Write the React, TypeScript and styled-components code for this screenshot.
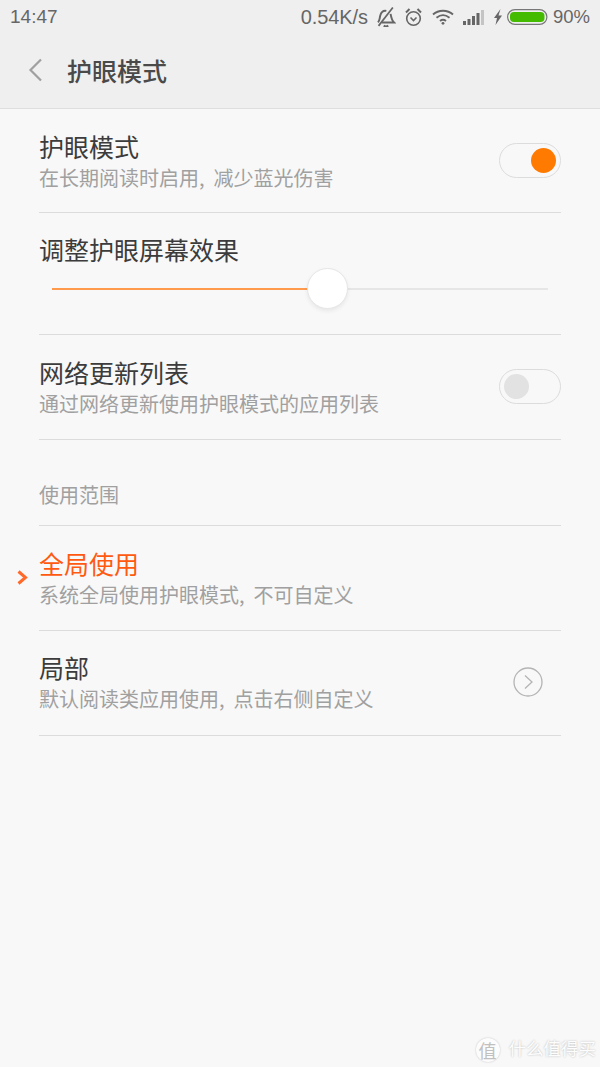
import React from "react";
import styled, { createGlobalStyle } from "styled-components";

const GlobalStyle = createGlobalStyle`
  html, body {
    margin: 0;
    padding: 0;
    background: #f8f8f8;
  }
`;

const cjk = `"Noto Sans CJK SC", "Liberation Sans", sans-serif`;

const Page = styled.div`
  position: relative;
  width: 600px;
  height: 1067px;
  overflow: hidden;
  background: #f8f8f8;
  font-family: ${cjk};
`;

const Top = styled.div`
  height: 108px;
  background: #efefef;
  border-bottom: 1px solid #dedede;
  display: flex;
  flex-direction: column;
`;

const StatusBar = styled.div`
  height: 34px;
  padding: 0 10px;
  display: flex;
  align-items: center;
  justify-content: space-between;
  font-family: "Liberation Sans", sans-serif;
  font-size: 19px;
  color: #666;
`;

const StatusRight = styled.div`
  display: flex;
  align-items: center;
`;

const Speed = styled.span`
  margin-right: 8px;
  font-size: 20px;
  letter-spacing: -0.1px;
`;

const Percent = styled.span`
  font-size: 18.500px;
`;

const StatusIcon = styled.svg<{ $gap?: number }>`
  display: block;
  margin-right: ${(p) => p.$gap ?? 0}px;
`;

const Header = styled.div`
  flex: 1;
  display: flex;
  align-items: center;
  padding: 0 0 2px 28px;
`;

const Title = styled.h1`
  margin: 0 0 0 24px;
  font-size: 25px;
  line-height: 32px;
  font-weight: 500;
  color: #4a4a4a;
`;

const List = styled.div`
  padding: 0 39px;
`;

const Row = styled.div<{ $height?: number; $raise?: number }>`
  position: relative;
  height: ${(p) => p.$height ?? 105}px;
  box-sizing: border-box;
  padding-bottom: ${(p) => p.$raise ?? 0}px;
  border-bottom: 1px solid #dcdcdc;
  display: flex;
  align-items: center;
  justify-content: space-between;
`;

const RowText = styled.div`
  display: flex;
  flex-direction: column;
  gap: 2px;
`;

const RowTitle = styled.div<{ $active?: boolean }>`
  font-size: 25px;
  line-height: 32px;
  color: ${(p) => (p.$active ? "#ff5a10" : "#3c3c3c")};
`;

const RowSub = styled.div`
  font-size: 20px;
  line-height: 28px;
  color: #a0a0a0;
`;

const SliderRow = styled.div`
  height: 122px;
  box-sizing: border-box;
  border-bottom: 1px solid #dcdcdc;
  padding-top: 20px;
`;

const SliderTrack = styled.div`
  position: relative;
  height: 2px;
  margin: 23px 13px 0;
  background: #e6e6e6;
`;

const SliderFill = styled.div`
  height: 100%;
  background: #ff9a4d;
`;

const SliderThumb = styled.div`
  position: absolute;
  top: -20px;
  width: 41px;
  height: 41px;
  margin-left: -20px;
  box-sizing: border-box;
  border-radius: 50%;
  background: #fff;
  border: 1px solid #e6e6e6;
  box-shadow: 0 2px 4px rgba(0, 0, 0, 0.07);
`;

const Section = styled.div`
  height: 86px;
  box-sizing: border-box;
  border-bottom: 1px solid #dcdcdc;
  padding-top: 41px;
  font-size: 20px;
  line-height: 28px;
  color: #a0a0a0;
`;

const Switch = styled.div<{ $on?: boolean }>`
  width: 62px;
  height: 35px;
  margin-bottom: 1px;
  box-sizing: border-box;
  border: 1px solid #dcdcdc;
  border-radius: 18px;
  padding: 4px;
  display: flex;
  justify-content: ${(p) => (p.$on ? "flex-end" : "flex-start")};
`;

const Knob = styled.div<{ $on?: boolean }>`
  width: 25px;
  height: 25px;
  border-radius: 50%;
  background: ${(p) => (p.$on ? "#ff7a00" : "#e2e2e2")};
`;

const SelectedMark = styled.svg`
  position: absolute;
  left: -22px;
  top: 44px;
`;

const Detail = styled.svg`
  display: block;
  margin-right: 18px;
`;

const Watermark = styled.div`
  position: absolute;
  right: 4px;
  bottom: 3px;
  display: flex;
  align-items: center;
  gap: 9px;
  font-size: 17.500px;
  line-height: 24px;
  color: #fdfdfd;
  text-shadow: 0 0 2px rgba(0, 0, 0, 0.28);
`;

const WatermarkText = styled.span`
  padding-bottom: 4px;
`;

const WatermarkBadge = styled.div`
  width: 24px;
  height: 24px;
  border-radius: 50%;
  background: #fcfcfc;
  box-shadow: 0 0 2px rgba(0, 0, 0, 0.22);
  color: #c0c0c0;
  text-shadow: none;
  font-size: 18px;
  line-height: 24px;
  text-align: center;
`;

function MuteIcon() {
  return (
    <StatusIcon $gap={9} width="20" height="20" viewBox="2.500 1 16 17.500" fill="none" stroke="#666" strokeWidth="1.700">
      <path d="M3.500 14.500C5 13 4.800 11 5.500 8.500C6.300 5.500 8.500 4 10.800 4.400" />
      <path d="M14.500 7C15 10 15.500 12.500 17.500 14.500H7" />
      <path d="M8.500 17.300c1 .8 3 .8 4 0" />
      <path d="M4 17.500L16.500 1.500" strokeWidth="1.500" />
    </StatusIcon>
  );
}

function AlarmIcon() {
  return (
    <StatusIcon $gap={10} width="17" height="20" viewBox="0 0 17 20" fill="none" stroke="#666" strokeWidth="1.600">
      <circle cx="8.500" cy="11.500" r="6.800" />
      <path d="M5.500 10.500L8.500 13.500L11.500 10.500" />
      <path d="M1 5.500L4.500 2M16 5.500L12.500 2" strokeWidth="2" />
    </StatusIcon>
  );
}

function WifiIcon() {
  return (
    <StatusIcon $gap={9} width="22" height="16" viewBox="0 0 22 16" fill="none" stroke="#666" strokeWidth="1.900">
      <path d="M1 5.500C6.500 .5 15.500 .5 21 5.500" />
      <path d="M4.500 8.800C8.500 5.500 13.500 5.500 17.500 8.800" />
      <path d="M8 12C9.800 10.600 12.200 10.600 14 12" />
      <circle cx="11" cy="14.300" r="1.400" fill="#666" stroke="none" />
    </StatusIcon>
  );
}

function SignalIcon() {
  return (
    <StatusIcon $gap={10} width="21" height="15" viewBox="0 0 21 15">
      <rect x="0" y="11" width="3" height="4" fill="#666" />
      <rect x="4.500" y="9" width="3" height="6" fill="#666" />
      <rect x="9" y="6" width="3" height="9" fill="#666" />
      <rect x="13.500" y="3" width="3" height="12" fill="#666" />
      <rect x="18" y="0" width="3" height="15" fill="#c4c4c4" />
    </StatusIcon>
  );
}

function BoltIcon() {
  return (
    <StatusIcon $gap={5} width="8" height="16" viewBox="0 0 8 16">
      <path d="M6.500 0L0 9h3L1.500 16L8 6.500H4.500z" fill="#666" />
    </StatusIcon>
  );
}

function BatteryIcon() {
  return (
    <StatusIcon $gap={5} width="41" height="16" viewBox="0 0 41 16">
      <rect x="0.600" y="0.600" width="39.300" height="14.800" rx="7.400" fill="none" stroke="#777" strokeWidth="1.200" />
      <rect x="3" y="3" width="34.500" height="10" rx="4" fill="#45bb00" />
    </StatusIcon>
  );
}

function App() {
  return (
    <Page>
      <GlobalStyle />
      <Top>
        <StatusBar>
          <span>14:47</span>
          <StatusRight>
            <Speed>0.54K/s</Speed>
            <MuteIcon />
            <AlarmIcon />
            <WifiIcon />
            <SignalIcon />
            <BoltIcon />
            <BatteryIcon />
            <Percent>90%</Percent>
          </StatusRight>
        </StatusBar>
        <Header>
          <svg width="15" height="24" viewBox="0 0 15 24" fill="none" stroke="#a0a0a0" strokeWidth="2.200">
            <path d="M13 1.500L2.500 12L13 22.500" />
          </svg>
          <Title>护眼模式</Title>
        </Header>
      </Top>
      <List>
        <Row $height={104}>
          <RowText>
            <RowTitle>护眼模式</RowTitle>
            <RowSub>在长期阅读时启用,&nbsp;&nbsp;减少蓝光伤害</RowSub>
          </RowText>
          <Switch $on>
            <Knob $on />
          </Switch>
        </Row>
        <SliderRow>
          <RowTitle>调整护眼屏幕效果</RowTitle>
          <SliderTrack>
            <SliderFill style={{ width: "55.500%" }} />
            <SliderThumb style={{ left: "55.500%" }} />
          </SliderTrack>
        </SliderRow>
        <Row>
          <RowText>
            <RowTitle>网络更新列表</RowTitle>
            <RowSub>通过网络更新使用护眼模式的应用列表</RowSub>
          </RowText>
          <Switch>
            <Knob />
          </Switch>
        </Row>
        <Section>使用范围</Section>
        <Row>
          <SelectedMark width="11" height="15" viewBox="0 0 11 15" fill="none" stroke="#ff6a2a" strokeWidth="3">
            <path d="M1.500 1.500L8.500 7.500L1.500 13.500" />
          </SelectedMark>
          <RowText>
            <RowTitle $active>全局使用</RowTitle>
            <RowSub>系统全局使用护眼模式,&nbsp;&nbsp;不可自定义</RowSub>
          </RowText>
        </Row>
        <Row $raise={2}>
          <RowText>
            <RowTitle>局部</RowTitle>
            <RowSub>默认阅读类应用使用,&nbsp;&nbsp;点击右侧自定义</RowSub>
          </RowText>
          <Detail width="30" height="30" viewBox="0 0 30 30" fill="none" stroke="#b4b4b4" strokeWidth="1.300">
            <circle cx="15" cy="15" r="14" />
            <path d="M12 8.500L19 15L12 21.500" />
          </Detail>
        </Row>
      </List>
      <Watermark>
        <WatermarkBadge>值</WatermarkBadge>
        <WatermarkText>什么值得买</WatermarkText>
      </Watermark>
    </Page>
  );
}

export default App;
